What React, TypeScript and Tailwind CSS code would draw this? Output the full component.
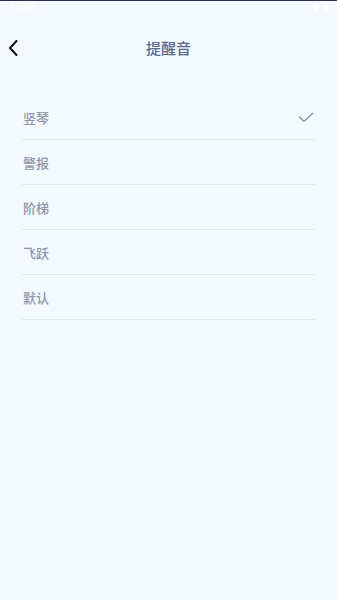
const sounds = ["竖琴", "警报", "阶梯", "飞跃", "默认"];

export default function App() {
  const selected = "竖琴";
  return (
    <div
      className="flex h-[600px] w-full flex-col overflow-hidden bg-[#f3f9fe]"
      style={{ fontFamily: '"Noto Sans CJK SC", "Noto Sans", sans-serif' }}
    >
      <div className="h-px w-full bg-[#2b3048]" />
      <div className="flex h-[14px] items-center justify-between px-[9px]">
        <span className="text-[10px] font-medium leading-none text-white" style={{ fontFamily: "Roboto, sans-serif" }}>
          12:00
        </span>
        <div className="flex items-center gap-[4px]">
          <svg width="9" height="8" viewBox="0 0 9 8">
            <path d="M0 1.5 Q4.5 -1.5 9 1.5 L4.5 8 Z" fill="#fff" />
          </svg>
          <div className="h-[8px] w-[4px] rounded-[1px] bg-white" />
        </div>
      </div>
      <header className="relative flex h-[63px] items-center justify-center">
        <button className="absolute left-[8px] top-[25px] flex h-[16px] w-[12px] items-center">
          <svg width="10" height="16" viewBox="0 0 10 16" fill="none">
            <path d="M8.5 1 L2 8 L8.5 15" stroke="#111" strokeWidth="2" strokeLinecap="round" strokeLinejoin="round" />
          </svg>
        </button>
        <h1 className="mt-[2px] text-[15px] font-medium leading-none text-[#5a698b]">提醒音</h1>
      </header>
      <ul className="mt-[17px] px-[22px]">
        {sounds.map((s) => (
          <li key={s} className="flex h-[45px] items-center justify-between border-b-[1.5px] border-[#e1e7ec] pt-[1px]">
            <span className="pl-px text-[13px] font-medium leading-none text-[#8e97a8]">{s}</span>
            {s === selected ? (
              <svg width="16" height="11" viewBox="0 0 16 11" fill="none" className="mr-px">
                <path d="M1 4.5 L6 9.5 L15 1" stroke="#7d869b" strokeWidth="1.1" />
              </svg>
            ) : null}
          </li>
        ))}
      </ul>
    </div>
  );
}
